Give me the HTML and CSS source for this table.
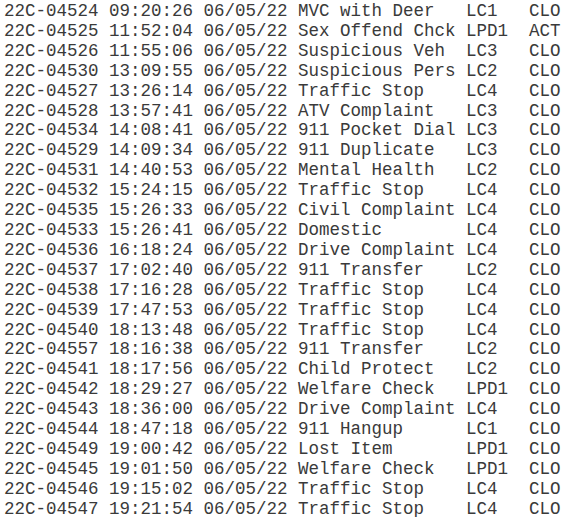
FILE: index.html
```html
<!DOCTYPE html>
<html lang="en">
<head>
    <meta charset="utf-8">
    <title>Call Log</title>
    <link rel="stylesheet" href="styles.css">
</head>
<body>
    <!-- Call log, one row per call -->
    <div class="calls">
        <div class="call"><span>22C-04524</span><span>09:20:26</span><span>06/05/22</span><span>MVC with Deer</span><span>LC1</span><span>CLO</span></div>
        <div class="call"><span>22C-04525</span><span>11:52:04</span><span>06/05/22</span><span>Sex Offend Chck</span><span>LPD1</span><span>ACT</span></div>
        <div class="call"><span>22C-04526</span><span>11:55:06</span><span>06/05/22</span><span>Suspicious Veh</span><span>LC3</span><span>CLO</span></div>
        <div class="call"><span>22C-04530</span><span>13:09:55</span><span>06/05/22</span><span>Suspicious Pers</span><span>LC2</span><span>CLO</span></div>
        <div class="call"><span>22C-04527</span><span>13:26:14</span><span>06/05/22</span><span>Traffic Stop</span><span>LC4</span><span>CLO</span></div>
        <div class="call"><span>22C-04528</span><span>13:57:41</span><span>06/05/22</span><span>ATV Complaint</span><span>LC3</span><span>CLO</span></div>
        <div class="call"><span>22C-04534</span><span>14:08:41</span><span>06/05/22</span><span>911 Pocket Dial</span><span>LC3</span><span>CLO</span></div>
        <div class="call"><span>22C-04529</span><span>14:09:34</span><span>06/05/22</span><span>911 Duplicate</span><span>LC3</span><span>CLO</span></div>
        <div class="call"><span>22C-04531</span><span>14:40:53</span><span>06/05/22</span><span>Mental Health</span><span>LC2</span><span>CLO</span></div>
        <div class="call"><span>22C-04532</span><span>15:24:15</span><span>06/05/22</span><span>Traffic Stop</span><span>LC4</span><span>CLO</span></div>
        <div class="call"><span>22C-04535</span><span>15:26:33</span><span>06/05/22</span><span>Civil Complaint</span><span>LC4</span><span>CLO</span></div>
        <div class="call"><span>22C-04533</span><span>15:26:41</span><span>06/05/22</span><span>Domestic</span><span>LC4</span><span>CLO</span></div>
        <div class="call"><span>22C-04536</span><span>16:18:24</span><span>06/05/22</span><span>Drive Complaint</span><span>LC4</span><span>CLO</span></div>
        <div class="call"><span>22C-04537</span><span>17:02:40</span><span>06/05/22</span><span>911 Transfer</span><span>LC2</span><span>CLO</span></div>
        <div class="call"><span>22C-04538</span><span>17:16:28</span><span>06/05/22</span><span>Traffic Stop</span><span>LC4</span><span>CLO</span></div>
        <div class="call"><span>22C-04539</span><span>17:47:53</span><span>06/05/22</span><span>Traffic Stop</span><span>LC4</span><span>CLO</span></div>
        <div class="call"><span>22C-04540</span><span>18:13:48</span><span>06/05/22</span><span>Traffic Stop</span><span>LC4</span><span>CLO</span></div>
        <div class="call"><span>22C-04557</span><span>18:16:38</span><span>06/05/22</span><span>911 Transfer</span><span>LC2</span><span>CLO</span></div>
        <div class="call"><span>22C-04541</span><span>18:17:56</span><span>06/05/22</span><span>Child Protect</span><span>LC2</span><span>CLO</span></div>
        <div class="call"><span>22C-04542</span><span>18:29:27</span><span>06/05/22</span><span>Welfare Check</span><span>LPD1</span><span>CLO</span></div>
        <div class="call"><span>22C-04543</span><span>18:36:00</span><span>06/05/22</span><span>Drive Complaint</span><span>LC4</span><span>CLO</span></div>
        <div class="call"><span>22C-04544</span><span>18:47:18</span><span>06/05/22</span><span>911 Hangup</span><span>LC1</span><span>CLO</span></div>
        <div class="call"><span>22C-04549</span><span>19:00:42</span><span>06/05/22</span><span>Lost Item</span><span>LPD1</span><span>CLO</span></div>
        <div class="call"><span>22C-04545</span><span>19:01:50</span><span>06/05/22</span><span>Welfare Check</span><span>LPD1</span><span>CLO</span></div>
        <div class="call"><span>22C-04546</span><span>19:15:02</span><span>06/05/22</span><span>Traffic Stop</span><span>LC4</span><span>CLO</span></div>
        <div class="call"><span>22C-04547</span><span>19:21:54</span><span>06/05/22</span><span>Traffic Stop</span><span>LC4</span><span>CLO</span></div>
    </div>
</body>
</html>
```

FILE: styles.css
```css
body {
    margin: 0;
    background-color: #fff;
}

.calls {
    padding: 2px 0 0 4px;
    font-family: "Courier New", "Nimbus Mono PS", "FreeMono", "Liberation Mono", monospace;
    font-size: 17.5px;
    line-height: 19.9px;
    color: #3a3a3a;
}

    /* fixed columns, like the printout */
    .calls .call {
        display: grid;
        grid-template-columns: 10ch 9ch 9ch 16ch 6ch auto;
        white-space: pre;
    }
```
